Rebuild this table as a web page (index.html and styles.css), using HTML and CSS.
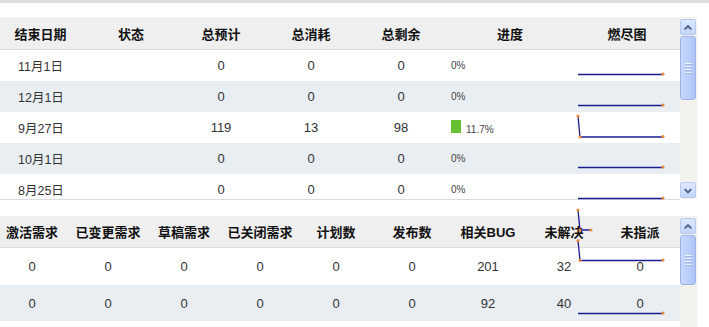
FILE: index.html
```html
<!DOCTYPE html>
<html lang="zh-CN">
<head>
<meta charset="utf-8">
<title>项目统计</title>
<link rel="stylesheet" href="styles.css">
</head>
<body>
<div class="page">
  <div class="topline"></div>

  <section class="panel panel-top">
    <div class="viewport">
      <div class="row-top head">
        <div class="c first">结束日期</div>
        <div class="c">状态</div>
        <div class="c">总预计</div>
        <div class="c">总消耗</div>
        <div class="c">总剩余</div>
        <div class="c">进度</div>
        <div class="c">燃尽图</div>
      </div>
      <div class="row-top">
        <div class="c date">11月1日</div><div class="c"></div>
        <div class="c">0</div><div class="c">0</div><div class="c">0</div>
        <div class="c prog"><span class="pct">0%</span></div><div class="c"></div>
      </div>
      <div class="row-top alt">
        <div class="c date">12月1日</div><div class="c"></div>
        <div class="c">0</div><div class="c">0</div><div class="c">0</div>
        <div class="c prog"><span class="pct">0%</span></div><div class="c"></div>
      </div>
      <div class="row-top">
        <div class="c date">9月27日</div><div class="c"></div>
        <div class="c">119</div><div class="c">13</div><div class="c">98</div>
        <div class="c prog"><span class="bar"></span><span class="pct">11.7%</span></div><div class="c"></div>
      </div>
      <div class="row-top alt">
        <div class="c date">10月1日</div><div class="c"></div>
        <div class="c">0</div><div class="c">0</div><div class="c">0</div>
        <div class="c prog"><span class="pct">0%</span></div><div class="c"></div>
      </div>
      <div class="row-top">
        <div class="c date">8月25日</div><div class="c"></div>
        <div class="c">0</div><div class="c">0</div><div class="c">0</div>
        <div class="c prog"><span class="pct">0%</span></div><div class="c"></div>
      </div>
    </div>
    <div class="scrollbar sb-top">
      <div class="sb-btn"><svg width="15" height="15" viewBox="0 0 15 15"><polyline points="4,9.5 7.5,6 11,9.5" /></svg></div>
      <div class="sb-thumb thumb-top"><span></span><span></span><span></span><span></span></div>
      <div class="sb-fill"></div>
      <div class="sb-btn"><svg width="15" height="15" viewBox="0 0 15 15"><polyline points="4,6 7.5,9.5 11,6" /></svg></div>
    </div>
  </section>

  <section class="panel panel-bottom">
    <div class="viewport">
      <div class="row-bot head">
        <div class="c first">激活需求</div>
        <div class="c">已变更需求</div>
        <div class="c">草稿需求</div>
        <div class="c">已关闭需求</div>
        <div class="c">计划数</div>
        <div class="c">发布数</div>
        <div class="c">相关BUG</div>
        <div class="c">未解决</div>
        <div class="c">未指派</div>
      </div>
      <div class="row-bot r1">
        <div class="c first">0</div><div class="c">0</div><div class="c">0</div>
        <div class="c">0</div><div class="c">0</div><div class="c">0</div>
        <div class="c">201</div><div class="c">32</div><div class="c">0</div>
      </div>
      <div class="row-bot alt">
        <div class="c first">0</div><div class="c">0</div><div class="c">0</div>
        <div class="c">0</div><div class="c">0</div><div class="c">0</div>
        <div class="c">92</div><div class="c">40</div><div class="c">0</div>
      </div>
    </div>
    <div class="scrollbar sb-bottom">
      <div class="sb-btn"><svg width="15" height="15" viewBox="0 0 15 15"><polyline points="4,9.5 7.5,6 11,9.5" /></svg></div>
      <div class="sb-thumb thumb-bottom"><span></span><span></span><span></span><span></span></div>
      <div class="sb-fill"></div>
    </div>
  </section>

  <svg class="burn-overlay" width="709" height="327" viewBox="0 0 709 327">
    <g class="ln">
      <polyline points="578,74.5 663,74.5"/>
      <polyline points="578,105.5 663,105.5"/>
      <polyline points="578,116 580,137 663,137"/>
      <polyline points="578,167.5 663,167.5"/>
      <polyline points="578,198.5 663,198.5"/>
      <polyline points="578,210 580,230 591,230"/>
      <polyline points="578,240.5 580,260.5 663,260.5"/>
      <polyline points="578,313.5 663,313.5"/>
    </g>
    <g class="dt">
      <circle cx="663" cy="74" r="1.6"/>
      <circle cx="663" cy="105" r="1.6"/>
      <circle cx="578" cy="116" r="1.6"/>
      <circle cx="580" cy="137" r="1.6"/>
      <circle cx="663" cy="136.5" r="1.6"/>
      <circle cx="663" cy="167" r="1.6"/>
      <circle cx="663" cy="198" r="1.6"/>
      <circle cx="578" cy="210" r="1.6"/>
      <circle cx="580" cy="230" r="1.6"/>
      <circle cx="591" cy="230" r="1.6"/>
      <circle cx="578" cy="240.5" r="1.6"/>
      <circle cx="580" cy="260.5" r="1.6"/>
      <circle cx="663" cy="260" r="1.6"/>
      <circle cx="663" cy="313" r="1.6"/>
    </g>
  </svg>
</div>
</body>
</html>
```

FILE: styles.css
```css
* { box-sizing: border-box; }

html, body {
  margin: 0;
  padding: 0;
  background: #ffffff;
  overflow: hidden;
}

body {
  font-family: "Liberation Sans", "Noto Sans CJK SC", sans-serif;
  font-size: 13px;
  color: #333333;
}

.page {
  position: relative;
  width: 709px;
  height: 327px;
  overflow: hidden;
}

.topline {
  height: 3px;
  background: #dedede;
}

.panel {
  display: flex;
  align-items: flex-start;
  width: 697px;
}

.panel-top {
  margin-top: 14px;
  height: 183px;
}

.panel-bottom {
  margin-top: 16px;
  height: 130px;
}

.viewport {
  width: 680px;
  overflow: hidden;
}

.panel-top .viewport {
  height: 183px;
  border-bottom: 1px solid #dcdcdc;
}

.panel-bottom .viewport {
  height: 130px;
}

/* rows */
.row-top {
  display: grid;
  grid-template-columns: 86px 90px 90px 90px 90px 128px 106px;
  height: 31px;
  align-items: center;
}

.row-bot {
  display: grid;
  grid-template-columns: 70px repeat(8, 76px);
  height: 36px;
  align-items: center;
}

.head {
  background: #efefef;
  border-bottom: 1px solid #dddddd;
  font-size: 13px;
  font-weight: 700;
  color: #111111;
}

.row-top.head { height: 33px; }
.row-bot.head { height: 32px; }
.row-bot.r1 { height: 37px; }

.alt { background: #e9eef2; }

.c {
  text-align: center;
  white-space: nowrap;
}

.row-top .c.first { padding-right: 5px; }
.row-bot .c.first { padding-right: 6px; }

.c.date {
  text-align: left;
  padding-left: 18px;
  font-size: 12.5px;
}

.c.prog {
  text-align: left;
  padding-left: 5px;
  font-size: 10px;
  color: #444444;
}

.bar {
  display: inline-block;
  width: 10px;
  height: 13px;
  background: #66c132;
  margin-right: 5px;
  vertical-align: baseline;
}

/* scrollbars */
.scrollbar {
  width: 17px;
  background: #f3f2ec;
  display: flex;
  flex-direction: column;
  padding: 2px 1px 1px 0;
}

.sb-top { height: 182px; }
.sb-bottom { height: 130px; }

.sb-btn {
  height: 16px;
  width: 16px;
  border: 1px solid #b8c9ef;
  border-radius: 2px;
  background: linear-gradient(#dfe8fd, #c4d4f8);
  display: flex;
  align-items: center;
  justify-content: center;
  flex: none;
}

.sb-btn svg polyline {
  fill: none;
  stroke: #4b5f8a;
  stroke-width: 2;
}

.sb-thumb {
  margin-top: 1px;
  width: 16px;
  border: 1px solid #9db2e6;
  border-radius: 3px;
  background: linear-gradient(90deg, #c9d8fc, #b9cdfa 60%, #aec3f3);
  display: flex;
  flex-direction: column;
  align-items: center;
  justify-content: center;
  gap: 1px;
  flex: none;
}

.thumb-top { height: 64px; }
.thumb-bottom { height: 50px; }

.sb-thumb span {
  display: block;
  width: 7px;
  height: 1px;
  background: #eef3fe;
  box-shadow: 0 1px 0 #9fb4e4;
}

.sb-thumb span + span { margin-top: 1px; }

.sb-fill { flex: 1; }

/* burn-down chart canvas drawn over the panels */
.burn-overlay {
  position: absolute;
  left: 0;
  top: 0;
  pointer-events: none;
}

.burn-overlay .ln polyline {
  fill: none;
  stroke: #1c1c92;
  stroke-width: 1.3;
}

.burn-overlay .dt circle {
  fill: #ee8a3a;
}
```
